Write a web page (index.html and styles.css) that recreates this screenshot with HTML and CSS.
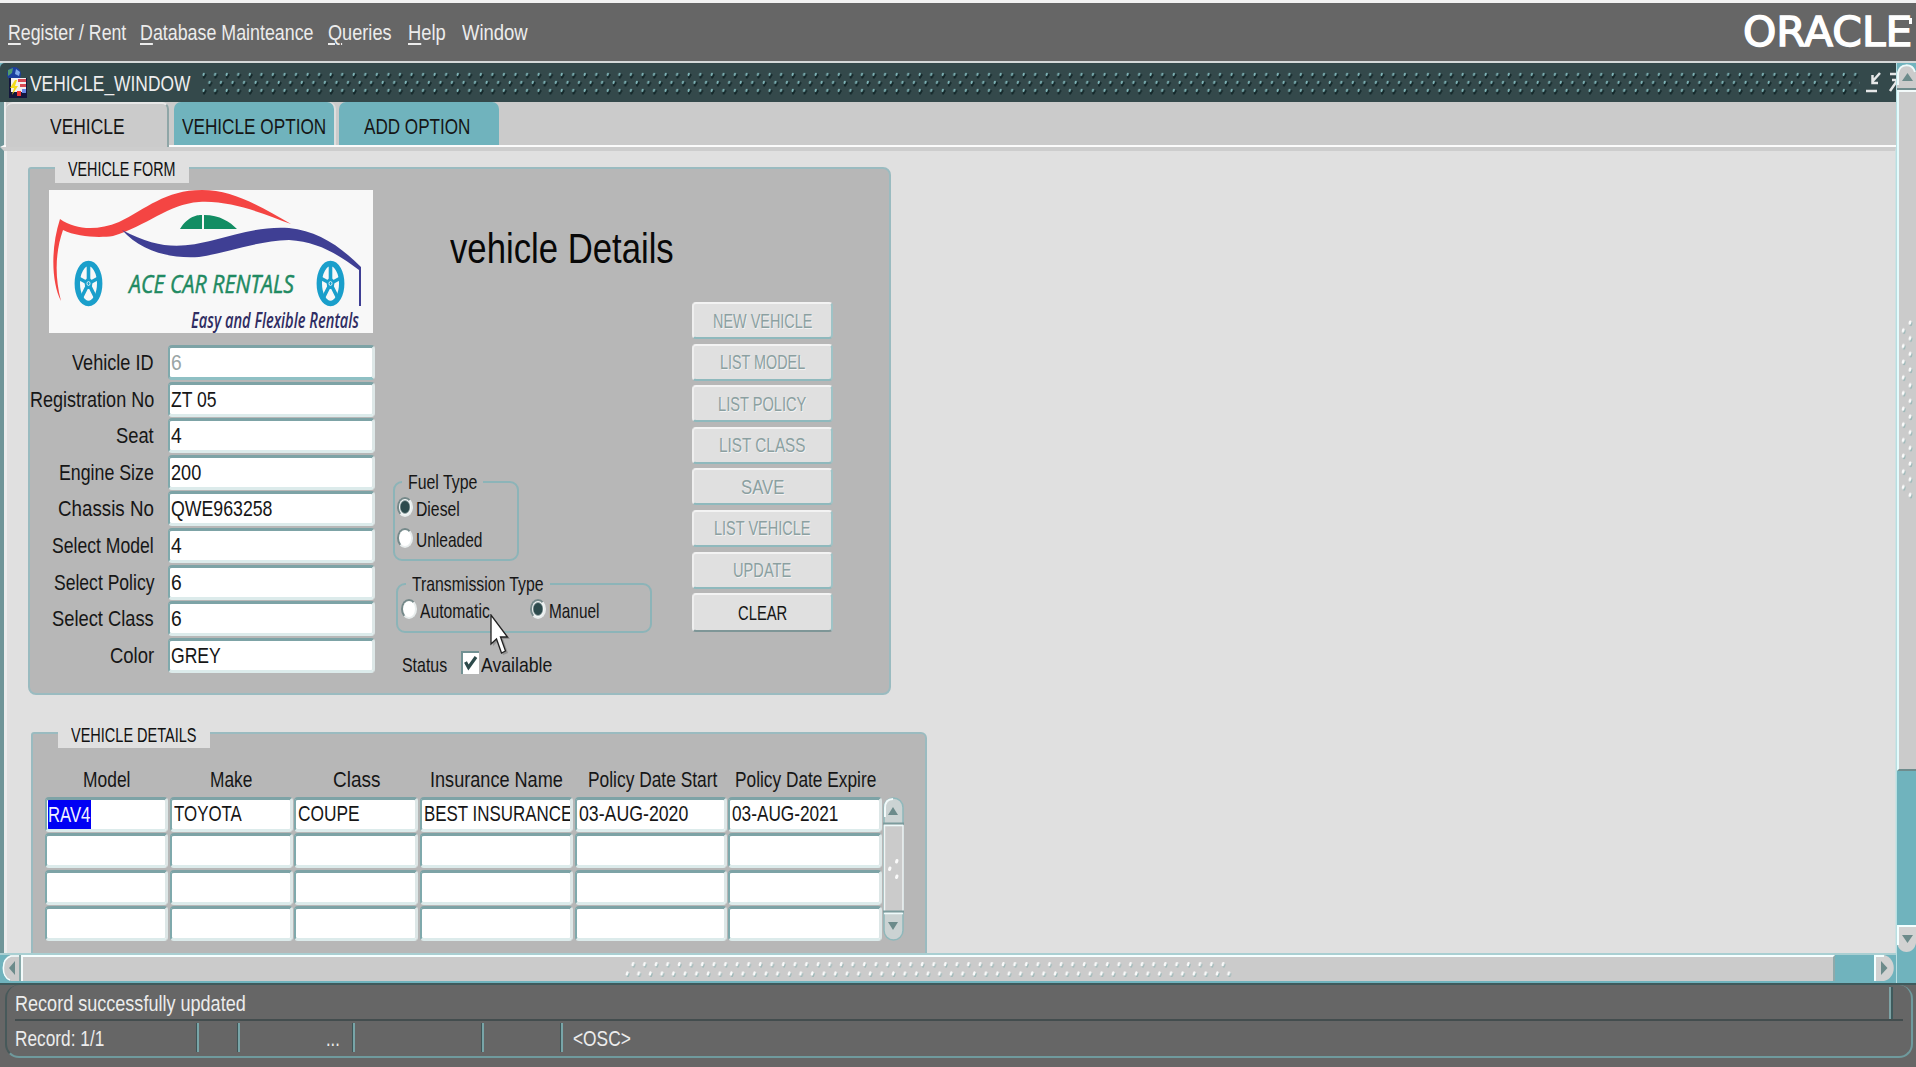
FILE: index.html
```html
<!DOCTYPE html>
<html lang="en">
<head>
<meta charset="utf-8">
<title>Vehicle Window</title>
<link rel="stylesheet" href="styles.css">
</head>
<body>
<svg class="defs" width="0" height="0" aria-hidden="true">
  <defs>
    <pattern id="title-dots" width="11.55" height="28" patternUnits="userSpaceOnUse">
      <g stroke-linecap="round" fill="none">
        <path stroke="#14282a" stroke-width="2.2" d="M4.400 6 3 8.500M10.200 14 8.800 16.500M4.400 22 3 24.500"/>
        <path stroke="#7fb5b8" stroke-width="1.900" d="M2.800 4.600 2.400 6M8.600 12.600 8.200 14M2.800 20.600 2.400 22"/>
      </g>
    </pattern>
    <pattern id="grip-dots" width="11.57" height="20" patternUnits="userSpaceOnUse">
      <g stroke-width="2.4" stroke-linecap="round" fill="none">
        <path stroke="#9fb9b9" d="M9.2 5.6 8.6 7.4M3.4 15 2.8 16.8"/>
        <path stroke="#fafafa" d="M8.2 4.2 7.6 6M2.4 13.6 1.8 15.4"/>
      </g>
    </pattern>
    <pattern id="grip-dots-v" width="16" height="15.67" patternUnits="userSpaceOnUse">
      <g stroke-width="2.6" stroke-linecap="round" fill="none">
        <path stroke="#9fb9b9" d="M12.2 4 11.8 5.8M5.4 11.8 5 13.6"/>
        <path stroke="#fafafa" d="M11.2 2.8 10.8 4.4M4.4 10.6 4 12.2"/>
      </g>
    </pattern>
    <g id="wheel">
      <ellipse rx="11.2" ry="20" fill="none" stroke="#1a9fcb" stroke-width="5.400"/>
      <g stroke="#1a9fcb" stroke-width="3.600"><path d="M0 0V-19M0 0-11-6M0 0 11-6M0 0-7.500 15M0 0 7.500 15"/></g>
      <ellipse rx="3.800" ry="5.500" fill="#1a9fcb"/>
      <ellipse rx="1.500" ry="2" fill="none" stroke="#d7eef6"/>
    </g>
  </defs>
</svg>

<nav class="menubar">
  <a><span data-w="117"><u>R</u>egister / Rent</span></a>
  <a><span data-w="172"><u>D</u>atabase Mainteance</span></a>
  <a><span data-w="62"><u>Q</u>ueries</span></a>
  <a><span data-w="36"><u>H</u>elp</span></a>
  <a><span data-w="64">Window</span></a>
  <div class="brand"><span data-w="168">ORACLE</span><i></i></div>
</nav>

<div class="workspace">
  <main class="window">
    <header class="titlebar">
      <svg class="app-icon" width="24" height="32" viewBox="0 0 24 32">
        <circle cx="9" cy="7" r="7" fill="#1c3f9e"/><path d="M3 3 8 1 7 6 3 9Z" fill="#4f9a6c"/><path d="M11 2 15 5 14 9 10 7Z" fill="#7fa8e8"/>
        <path d="M4 11H22V31H4Z" fill="#14163c"/><path d="M6 11H21V25H6Z" fill="#f4f0ee"/>
        <path d="M13 12H21V15H13ZM15 17H21V20H15Z" fill="#d84a54"/><path d="M10 13 5 21H9L7 28 13 19H10L12 13Z" fill="#f5dc1a"/><path d="M12 24H16V29H12Z" fill="#e33"/><path d="M17 22H21V26H17Z" fill="#6a86e6"/>
      </svg>
      <span class="window-name"><span data-w="159">VEHICLE_WINDOW</span></span>
      <svg class="title-grip" height="28"><rect width="100%" height="28" fill="url(#title-dots)"/></svg>
      <svg class="window-buttons" width="30" height="22" viewBox="0 0 30 22" fill="none" stroke="#e6e8e8" stroke-width="2.5"><path d="M14 1 6 10M6.500 3V11H12M0 19H11"/><path d="M24 2H31M24 19 31 9M26 8H32"/></svg>
    </header>

    <div class="tabs">
      <div class="tab active"><span data-w="73">VEHICLE</span></div>
      <div class="tab"><span data-w="143">VEHICLE OPTION</span></div>
      <div class="tab last"><span data-w="105">ADD OPTION</span></div>
    </div>

    <div class="canvas">
      <section class="frame form-frame">
        <h2 class="frame-title"><span data-w="106">VEHICLE FORM</span></h2>
        <div class="form-left">
          <svg class="logo" width="324" height="143" viewBox="0 0 324 143">
            <rect width="324" height="143" fill="#f8f8f8"/>
            <path fill="#f44543" d="M11 29C27 40 48 41 70 32C97 19 116 0 153 0C184 0 211 16 242 34C217 25 183 10 150 12C119 14 98 36 64 46C50 48 28 47 14 40C7 60 5 84 12 111C3 94 1 60 11 29Z"/>
            <path fill="#3f3f94" d="M73 40C111 60 133 58 165 50C191 43 216 36 240 38C268 41 290 55 312 77V116H310V80C287 63 269 52 240 50C207 51 177 63 150 67C119 69 91 60 73 40Z"/>
            <path fill="#128d63" d="M131 39C140 24 152 25 153 25V39ZM155 25C171 25 181 32 188 39H155Z"/>
            <use href="#wheel" x="39.500" y="93.500"/><use href="#wheel" x="281.500" y="93.500"/>
            <text x="80" y="103" textLength="165" lengthAdjust="spacingAndGlyphs" class="logo-name">ACE CAR RENTALS</text>
            <text x="142" y="138" textLength="168" lengthAdjust="spacingAndGlyphs" class="logo-tag">Easy and Flexible Rentals</text>
          </svg>
          <div class="fields">
            <label><span data-w="80">Vehicle ID</span></label><div class="field dim"><span data-w="9">6</span></div>
            <label><span data-w="123">Registration No</span></label><div class="field"><span data-w="44">ZT 05</span></div>
            <label><span data-w="36">Seat</span></label><div class="field"><span data-w="9">4</span></div>
            <label><span data-w="93">Engine Size</span></label><div class="field"><span data-w="29">200</span></div>
            <label><span data-w="94">Chassis No</span></label><div class="field"><span data-w="100">QWE963258</span></div>
            <label><span data-w="100">Select Model</span></label><div class="field"><span data-w="9">4</span></div>
            <label><span data-w="99">Select Policy</span></label><div class="field"><span data-w="9">6</span></div>
            <label><span data-w="100">Select Class</span></label><div class="field"><span data-w="9">6</span></div>
            <label><span data-w="43">Color</span></label><div class="field"><span data-w="48">GREY</span></div>
          </div>
        </div>

        <div class="form-middle">
          <h1><span data-w="222">vehicle Details</span></h1>
          <div class="group fuel">
            <div class="group-title"><span data-w="68">Fuel Type</span></div>
            <div class="option"><i class="radio on"></i><span data-w="42">Diesel</span></div>
            <div class="option"><i class="radio"></i><span data-w="65">Unleaded</span></div>
          </div>
          <div class="group transmission">
            <div class="group-title"><span data-w="130">Transmission Type</span></div>
            <div class="option"><i class="radio"></i><span data-w="68">Automatic</span></div>
            <div class="option"><i class="radio on"></i><span data-w="49">Manuel</span></div>
          </div>
          <div class="status-row">
            <span data-w="44">Status</span>
            <svg class="check" width="18" height="23" viewBox="0 0 18 23"><path d="M0 0H18V23H0Z" fill="#fff"/><path d="M1 23V1H18" fill="none" stroke="#719193" stroke-width="2"/><path d="M4.500 11 7.500 16.500 15 6" fill="none" stroke="#2d4a4b" stroke-width="3.200"/></svg>
            <span data-w="70">Available</span>
          </div>
          <svg class="pointer" width="22" height="44" viewBox="0 0 22 44"><path d="M3 3V32L8 27 13 41 18 39 13 25H20Z" fill="#777" opacity=".55"/><path d="M1 1V30L6.500 25 11.500 39 15.500 37 10.500 23H17.500Z" fill="#fff" stroke="#222" stroke-width="1.300"/></svg>
        </div>

        <div class="buttons">
          <button disabled><span data-w="98">NEW VEHICLE</span></button>
          <button disabled><span data-w="84">LIST MODEL</span></button>
          <button disabled><span data-w="87">LIST POLICY</span></button>
          <button disabled><span data-w="85">LIST CLASS</span></button>
          <button disabled><span data-w="42">SAVE</span></button>
          <button disabled><span data-w="95">LIST VEHICLE</span></button>
          <button disabled><span data-w="57">UPDATE</span></button>
          <button><span data-w="48">CLEAR</span></button>
        </div>
      </section>

      <section class="frame details-frame">
        <h2 class="frame-title"><span data-w="124">VEHICLE DETAILS</span></h2>
        <div class="records">
          <div class="head"><span data-w="46">Model</span></div>
          <div class="head"><span data-w="41">Make</span></div>
          <div class="head"><span data-w="46">Class</span></div>
          <div class="head"><span data-w="131">Insurance Name</span></div>
          <div class="head start"><span data-w="128">Policy Date Start</span></div>
          <div class="head"><span data-w="140">Policy Date Expire</span></div>
          <div class="cell"><mark><span data-w="41">RAV4</span></mark></div>
          <div class="cell"><span data-w="66">TOYOTA</span></div>
          <div class="cell"><span data-w="60">COUPE</span></div>
          <div class="cell"><span data-w="147">BEST INSURANCE</span></div>
          <div class="cell"><span data-w="108">03-AUG-2020</span></div>
          <div class="cell"><span data-w="105">03-AUG-2021</span></div>
          <div class="cell"></div><div class="cell"></div><div class="cell"></div><div class="cell"></div><div class="cell"></div><div class="cell"></div>
          <div class="cell"></div><div class="cell"></div><div class="cell"></div><div class="cell"></div><div class="cell"></div><div class="cell"></div>
          <div class="cell"></div><div class="cell"></div><div class="cell"></div><div class="cell"></div><div class="cell"></div><div class="cell"></div>
        </div>
        <svg class="record-scroll" width="21" height="144" viewBox="0 0 21 144">
          <rect x="1" y="1" width="19" height="142" rx="9.500" fill="#cbd3d3" stroke="#8fb8bb" stroke-width="1.500"/>
          <path d="M2 20V11C2 4 6 2 10 2" fill="none" stroke="#f2fafa" stroke-width="2"/>
          <rect x="1" y="26" width="19" height="88" fill="#cbcbcb"/><path d="M1.500 28V114M20 28V114" stroke="#f0f4f4" stroke-width="1.500"/>
          <path d="M0 26.500H21M0 114.500H21" stroke="#7c9c9d" stroke-width="2"/><path d="M1 28.500H20M1 116.500H20" stroke="#eefafa" stroke-width="1.500"/>
          <path d="M5 18 10 10 15 18ZM5 125 10 133 15 125Z" fill="#6c8b8b"/>
          <path d="M14 63.500 13.500 65M7 71 6.500 72.500M14 79 13.500 80.500" stroke="#fafafa" stroke-width="3" stroke-linecap="round"/>
        </svg>
      </section>
    </div>

    <div class="scroll-h">
      <svg class="arrow-left" width="20" height="26" viewBox="0 0 20 26"><path d="M20 0H10C-1 3-1 23 10 26H20Z" fill="#cbcbcb"/><path d="M18 1H10C0 4 0 22 9 25" fill="none" stroke="#f3ffff" stroke-width="1.500"/><path d="M14 6V20L8 13Z" fill="#6c8b8b"/><path d="M19 0V26" stroke="#8aa" stroke-width="2"/></svg>
      <div class="thumb"><svg width="607" height="20"><rect width="607" height="20" fill="url(#grip-dots)"/></svg></div>
      <svg class="arrow-right" width="21" height="26" viewBox="0 0 21 26"><path d="M0 0H10C23 3 23 23 10 26H0Z" fill="#d2d2d2"/><path d="M1 26V1H10" fill="none" stroke="#f3ffff" stroke-width="2"/><path d="M7 6V20L13.500 13Z" fill="#6c8b8b"/></svg>
    </div>
  </main>

  <aside class="scroll-v">
    <svg width="19" height="27" viewBox="0 0 19 27"><path d="M0 27V10C2-1 17-1 19 10V27Z" fill="#cbcbcb"/><path d="M1 22V10C3 0 15 0 18 9" fill="none" stroke="#eefafa" stroke-width="2"/><path d="M5 18H16L10.500 10Z" fill="#6c8b8b"/><path d="M0 26H19" stroke="#6f8c8d" stroke-width="2"/></svg>
    <div class="thumb-v"><svg width="16" height="181"><rect width="16" height="181" fill="url(#grip-dots-v)"/></svg></div>
    <svg class="arrow-down" width="19" height="28" viewBox="0 0 19 28"><path d="M0 0H19V18C17 30 2 30 0 18Z" fill="#d2d2d2"/><path d="M1 20V1H19" fill="none" stroke="#f3ffff" stroke-width="2"/><path d="M5 10H16L10.500 18Z" fill="#6c8b8b"/></svg>
  </aside>
</div>

<footer class="statusbar">
  <div class="status-panel">
    <div class="message"><span data-w="229">Record successfully updated</span></div>
    <div class="indicators">
      <div class="slot s1"><span data-w="88">Record: 1/1</span></div>
      <div class="slot s2"></div>
      <div class="slot s3"><span data-w="12">...</span></div>
      <div class="slot s4"></div>
      <div class="slot s5"></div>
      <div class="slot s6"><span data-w="56">&lt;OSC&gt;</span></div>
    </div>
  </div>
</footer>
<script src="fit.js"></script>
</body>
</html>
```
FILE: styles.css
```css
* { box-sizing: border-box; }
body {
  margin: 0;
  width: 1916px;
  height: 1067px;
  overflow: hidden;
  display: flex;
  flex-direction: column;
  background: #666;
  border-top: 3px solid #f2f2f2;
  font: 22px/30px "Liberation Sans", Arial, sans-serif;
  color: #161616;
}
svg { display: block; flex: none; }
.defs { position: absolute; }
h1, h2 { margin: 0; font-weight: normal; }
[data-w] { display: inline-block; white-space: pre; transform-origin: 0 50%; flex: none; }

.menubar { flex: none; height: 60px; display: flex; align-items: center; gap: 14px; padding: 2px 0 0 8px; border-bottom: 2px solid #d5d9d9; color: #ececec; }
.menubar a:nth-child(4) { margin-left: 3px; }
.menubar a:nth-child(5) { margin-left: 2px; }
.menubar u { text-decoration-thickness: 1.5px; text-underline-offset: 3px; }
.brand { margin: -2px 4px 0 auto; display: flex; font: 40px/44px "DejaVu Sans", sans-serif; color: #fff; -webkit-text-stroke: 1.4px #fff; }
.brand i { width: 3px; height: 6px; background: #fff; margin: 8px 0 0 -3px; }

.workspace { flex: none; height: 920px; display: grid; grid-template-columns: 1896px 20px; background: #70b3bd; }
.window { display: flex; flex-direction: column; min-width: 0; overflow: hidden; }

.titlebar { flex: none; height: 39px; display: flex; align-items: center; padding-left: 5px; background: #34494b; color: #eee; border-radius: 5px 0 0 0; }
.window-name { margin: 2px 0 0 1px; width: 172px; }
.title-grip { width: 1659px; }
.window-buttons { margin-left: 6px; }

.tabs { flex: none; height: 45px; display: flex; background: #cbcbcb; border-bottom: 2px solid #fbfbfb; border-left: 4px solid #6f9598; padding-left: 2px; gap: 5px; box-shadow: inset 2px 0 #ececec; }
.tab { width: 160px; height: 43px; background: #70b3bd; border-radius: 7px 7px 0 0; text-align: center; line-height: 50px; box-shadow: 2px 0 #dedede; }
.tab.active { width: 163px; height: 46px; background: #cbcbcb; border-top: 2px solid #e8e8e8; border-right: 2px solid #8fa6a7; line-height: 46px; padding-left: 1px; box-shadow: none; }
.tab.last { padding-right: 3px; box-shadow: none; }

.canvas { flex: none; height: 806px; background: #e0e0e0; border-top: 4px solid #cdcdcd; border-left: 4px solid #6f9598; border-right: 1px solid #cfe0e1; box-shadow: inset 3px 0 #ececec; overflow: hidden; padding: 16px 0 0 24px; }
.frame { position: relative; background: #b7b7b7; border: 2px solid #9abbc0; border-radius: 3px 8px 8px 8px; display: flex; }
.frame-title { position: absolute; background: #e0e0e0; font-size: 20px; line-height: 26px; color: #111; }
.form-frame { width: 863px; height: 528px; }
.form-frame .frame-title { left: 25px; top: -13px; width: 134px; height: 27px; padding-left: 13px; }

.form-left { width: 346px; flex: none; padding-top: 21px; }
.logo { margin-left: 19px; overflow: visible; }
.logo-name { font: italic 26px "Open Sans", sans-serif; fill: #1f8a62; stroke: #1f8a62; stroke-width: .5px; }
.logo-tag { font: italic 600 21px "Open Sans", sans-serif; fill: #302d62; }
.fields { margin-top: 12px; display: grid; grid-template-columns: 138px 207px; grid-auto-rows: 36.6px; align-items: start; }
.fields label { text-align: right; padding-right: 14px; line-height: 35px; white-space: nowrap; }
.field, .cell { height: 35px; background: #fff; border: solid; border-width: 3px 3px 3px 2px; border-color: #7da3a6 #dde7e7 #dcebeb #7fa9ac; border-radius: 4px; padding-left: 1px; line-height: 29px; overflow: hidden; white-space: nowrap; }
.dim { color: #9aa5a5; border-bottom-color: #8fc0c4; }

.form-middle { width: 316px; flex: none; position: relative; }
h1 { margin: 54px 0 0 74px; font-size: 43px; line-height: 50px; color: #080808; }
.group { position: relative; border: 2px solid #8cb4b8; border-radius: 9px; }
.group-title { position: absolute; top: -16px; background: #b7b7b7; padding: 0 6px; line-height: 30px; }
.fuel { width: 126px; height: 80px; margin: 208px 0 0 17px; padding: 10px 0 0 2px; font-size: 21px; }
.fuel .group-title { left: 7px; }
.option { display: flex; align-items: center; gap: 3px; height: 31px; }
.transmission { width: 256px; height: 50px; margin: 22px 0 0 20px; padding: 10px 0 0 3px; display: flex; font-size: 21px; }
.transmission .group-title { left: 8px; }
.transmission .option:last-child { margin-left: 40px; }
.radio { width: 16px; height: 20px; border-radius: 50%; background: #fff; border: 2px solid; border-color: #75898a #e8eded #e8eded #75898a; margin-top: -3px; }
.radio.on { background: radial-gradient(ellipse, #2d4b4d 48%, #f4f8f8 65%); }
.status-row { display: flex; align-items: center; height: 30px; margin: 17px 0 0 26px; font-size: 21px; }
.check { margin: -6px 0 0 14px; }
.check + span { margin-left: 2px; }
.pointer { position: absolute; left: 114px; top: 445px; }

.buttons { padding-top: 133px; width: 142px; display: grid; grid-auto-rows: 36px; row-gap: 5.6px; align-content: start; }
button { width: 141px; height: 37px; padding: 0; border: 2px solid; border-color: #f3f3f3 #9fc3c6 #8fb9bd #efefef; border-radius: 4px; background: #e0e0e0; font: 20px/30px "Liberation Sans", Arial, sans-serif; color: #161616; text-align: center; }
button:disabled { color: #8ba0a1; text-shadow: 1px 1px #f3f3f3; }
button:last-child { border-bottom-color: #7e9697; height: 39px; }

.details-frame { width: 896px; height: 260px; margin: 37px 0 0 3px; border-radius: 3px 6px 0 0; }
.details-frame .frame-title { left: 25px; top: -12px; width: 152px; padding-left: 13px; }
.records { margin: 31px 0 0 12px; display: grid; grid-template-columns: 123px 123px 124px 153px 152px 154px; grid-template-rows: 30px repeat(4, 35px); column-gap: 1.7px; row-gap: 1.5px; }
.head { text-align: center; line-height: 30px; white-space: nowrap; }
.head.start { padding-left: 3px; }
.cell { padding-left: 2px; line-height: 27px; }
.cell mark { display: block; width: 43px; height: 31px; margin: -2px 0 0 -1px; line-height: 33px; background: #0000f4; color: #f2f2ff; }
.record-scroll { margin: 63px 0 0 1px; }

.scroll-h { flex: none; height: 30px; display: flex; border-top: 2px solid #a9cfd2; padding: 0 0 2px 1px; }
.thumb { width: 1814px; background: #cbcbcb; border-top: 2px solid #f6ffff; border-left: 2px solid #f3fafa; border-right: 2px solid #8fa9aa; margin-right: 39px; padding: 2px 0 0 602px; }

.scroll-v { display: flex; flex-direction: column; border-left: 1px solid #b8dfe2; }
.thumb-v { height: 681px; background: #cbcbcb; border-left: 2px solid #e4fbfc; border-top: 2px solid #f3fafa; border-bottom: 2px solid #6f8c8d; padding-top: 227px; }
.arrow-down { margin-top: 154px; }

.statusbar { flex: none; height: 84px; border-top: 2px solid #3f5a5c; padding: 0 3px 0 5px; color: #ececec; }
.status-panel { height: 73px; border: 2px solid #6f9a9d; border-top: 0; border-left-color: #47595a; border-radius: 14px; padding: 2px 8px 0 8px; }
.message { height: 34px; border-bottom: 2px solid #434d4e; line-height: 34px; background: linear-gradient(to right, #7ea3a5 2px, #3f5a5c 2px) right 10px top / 4px 100% no-repeat; }
.indicators { display: flex; margin-top: 2px; height: 29px; line-height: 32px; }
.slot { border-right: 2px solid #78a5a8; box-shadow: inset -1px 0 #3f5557; }
.s1 { width: 184px; } .s2 { width: 41px; } .s3 { width: 115px; text-align: right; padding-right: 13px; }
.s4 { width: 129px; } .s5 { width: 79px; } .s6 { border: 0; box-shadow: none; padding-left: 10px; }
```
FILE: fit.js
```js
// Condenses each caption to the width, in pixels, that its data-w attribute gives.
document.querySelectorAll('[data-w]').forEach(function (el) {
  var natural = el.offsetWidth;
  var wanted = Number(el.dataset.w) + 1.5;
  el.style.transform = 'scaleX(' + wanted / natural + ')';
  el.style.marginRight = wanted - natural + 'px';
});
```
